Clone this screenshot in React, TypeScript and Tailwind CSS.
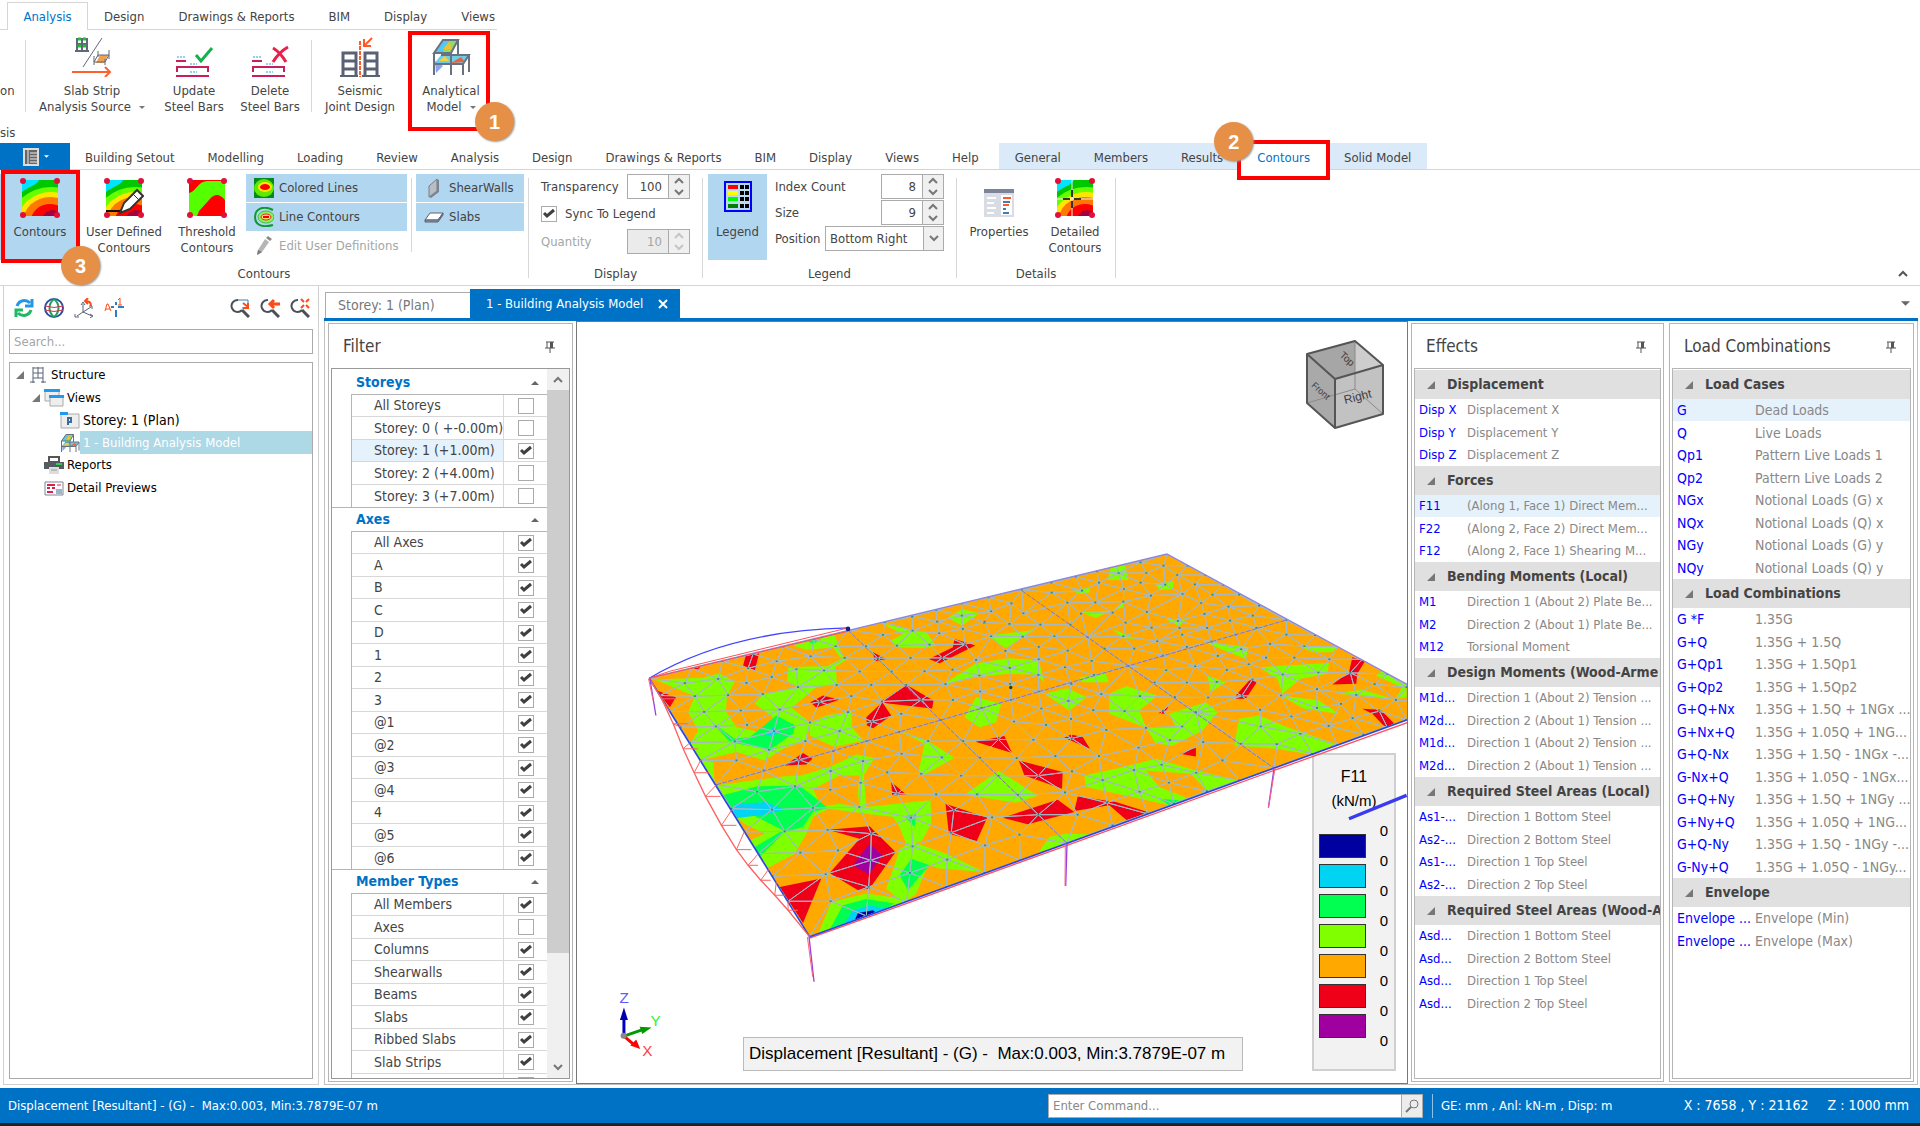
import { ReactNode } from "react";
import clsx from "clsx";

type Point = [number, number];

/* ---------- data ---------- */

const stripTabs = ["Design", "Drawings & Reports", "BIM", "Display", "Views"];

const ribbonTabs = [
  "Building Setout",
  "Modelling",
  "Loading",
  "Review",
  "Analysis",
  "Design",
  "Drawings & Reports",
  "BIM",
  "Display",
  "Views",
  "Help",
];

const filterGroups = [
  {
    title: "Storeys",
    rows: ["All Storeys", "Storey: 0 ( +-0.00m)", "Storey: 1 (+1.00m)", "Storey: 2 (+4.00m)", "Storey: 3 (+7.00m)"],
    checked: ["Storey: 1 (+1.00m)"],
  },
  {
    title: "Axes",
    rows: ["All Axes", "A", "B", "C", "D", "1", "2", "3", "@1", "@2", "@3", "@4", "4", "@5", "@6"],
    checked: ["All Axes", "A", "B", "C", "D", "1", "2", "3", "@1", "@2", "@3", "@4", "4", "@5", "@6"],
  },
  {
    title: "Member Types",
    rows: ["All Members", "Axes", "Columns", "Shearwalls", "Beams", "Slabs", "Ribbed Slabs", "Slab Strips", ""],
    checked: ["All Members", "Columns", "Shearwalls", "Beams", "Slabs", "Ribbed Slabs", "Slab Strips"],
  },
];

type Group = { title: string; rows: [string, string][] };

const effects: Group[] = [
  {
    title: "Displacement",
    rows: [
      ["Disp X", "Displacement X"],
      ["Disp Y", "Displacement Y"],
      ["Disp Z", "Displacement Z"],
    ],
  },
  {
    title: "Forces",
    rows: [
      ["F11", "(Along 1, Face 1) Direct Mem..."],
      ["F22", "(Along 2, Face 2) Direct Mem..."],
      ["F12", "(Along 2, Face 1) Shearing M..."],
    ],
  },
  {
    title: "Bending Moments (Local)",
    rows: [
      ["M1", "Direction 1 (About 2) Plate Be..."],
      ["M2", "Direction 2 (About 1) Plate Be..."],
      ["M12", "Torsional Moment"],
    ],
  },
  {
    title: "Design Moments (Wood-Arme",
    rows: [
      ["M1d...", "Direction 1 (About 2) Tension ..."],
      ["M2d...", "Direction 2 (About 1) Tension ..."],
      ["M1d...", "Direction 1 (About 2) Tension ..."],
      ["M2d...", "Direction 2 (About 1) Tension ..."],
    ],
  },
  {
    title: "Required Steel Areas (Local)",
    rows: [
      ["As1-...", "Direction 1 Bottom Steel"],
      ["As2-...", "Direction 2 Bottom Steel"],
      ["As1-...", "Direction 1 Top Steel"],
      ["As2-...", "Direction 2 Top Steel"],
    ],
  },
  {
    title: "Required Steel Areas (Wood-A",
    rows: [
      ["Asd...", "Direction 1 Bottom Steel"],
      ["Asd...", "Direction 2 Bottom Steel"],
      ["Asd...", "Direction 1 Top Steel"],
      ["Asd...", "Direction 2 Top Steel"],
    ],
  },
];

const loads: Group[] = [
  {
    title: "Load Cases",
    rows: [
      ["G", "Dead Loads"],
      ["Q", "Live Loads"],
      ["Qp1", "Pattern Live Loads 1"],
      ["Qp2", "Pattern Live Loads 2"],
      ["NGx", "Notional Loads (G) x"],
      ["NQx", "Notional Loads (Q) x"],
      ["NGy", "Notional Loads (G) y"],
      ["NQy", "Notional Loads (Q) y"],
    ],
  },
  {
    title: "Load Combinations",
    rows: [
      ["G *F", "1.35G"],
      ["G+Q", "1.35G + 1.5Q"],
      ["G+Qp1", "1.35G + 1.5Qp1"],
      ["G+Qp2", "1.35G + 1.5Qp2"],
      ["G+Q+Nx", "1.35G + 1.5Q + 1NGx ..."],
      ["G+Nx+Q", "1.35G + 1.05Q + 1NG..."],
      ["G+Q-Nx", "1.35G + 1.5Q - 1NGx -..."],
      ["G-Nx+Q", "1.35G + 1.05Q - 1NGx..."],
      ["G+Q+Ny", "1.35G + 1.5Q + 1NGy ..."],
      ["G+Ny+Q", "1.35G + 1.05Q + 1NG..."],
      ["G+Q-Ny", "1.35G + 1.5Q - 1NGy -..."],
      ["G-Ny+Q", "1.35G + 1.05Q - 1NGy..."],
    ],
  },
  {
    title: "Envelope",
    rows: [
      ["Envelope ...", "Envelope (Min)"],
      ["Envelope ...", "Envelope (Max)"],
    ],
  },
];

const legendColors = [
  "bg-[#0000a0]",
  "bg-[#00d4f2]",
  "bg-[#00ff50]",
  "bg-[#80ff00]",
  "bg-[#ffa900]",
  "bg-[#ef0018]",
  "bg-[#a000a0]",
];

/* ---------- slab mesh ---------- */

const nodeText = `28,413 60,465 90,513 122,560 150,607 182,660 230,733 275,805 313,875 356,940 398,1008 445,1083 510,1190
155,383 135,428 235,415 248,362 320,427 325,383 340,340 165,467 265,464 193,514 303,510 228,558 322,553 285,603 403,572
388,628 290,660 372,690 352,754 466,738 397,808 520,803 435,873 482,937 564,869 595,930 558,1002 573,1083 680,1127
687,1040 693,960 695,880 659,800 572,748 663,727 573,692 670,662 478,658 497,602 581,632 600,572 511,546 420,507 540,484
635,467 625,515 681,602 697,543 727,483 785,520 779,574 786,640 743,696 845,700 774,760 814,832 890,762 819,918 811,998
801,1085 923,958 920,1040 935,877 943,810 965,706 907,651 866,602 971,602 903,539 1022,652 1077,706 1013,762 1136,763
1058,831 1140,883 1037,915 1035,998 1143,960 1197,823 1197,706 1132,653 1182,598 1077,597 1124,543 1026,502 1022,453
940,478 845,478 800,433 695,433 756,393 660,393 591,433 553,390 615,352 588,317 513,347 524,296 475,440 369,461 396,409
470,386 411,362 431,318 625,268 679,317 715,353 730,283 735,245 819,270 818,228 772,315 813,352 870,312 855,392 908,352
939,387 918,431 899,278 893,243 890,208 967,225 967,188 970,265 977,311 1010,358 1020,405 1111,382 1112,430 1114,478
1098,331 1055,287 1035,244 1055,212 1047,170 1116,188 1147,147 1152,218 1110,250 1150,288 1197,403
1203,252 1245,287 1237,156 1284,186 1236,126 1293,252 1325,219 1328,150 1309,108 1368,185 1345,290 1285,330 1198,319
1198,356 1198,453 1277,380 1287,481 1296,430 1206,504 1220,553 1295,535 1297,594 1362,509 1386,461 1364,403 1357,361
1396,324 1485,324 1467,376 1373,92 1379,126 1420,216 1452,183 1454,145 1438,97 1430,75 1504,126 1521,97 1504,65 1573,75
1583,40 1614,103 1578,132 1535,165 1523,214 1459,246 1452,287 1537,261 1554,302 1621,262 1616,241 1630,160 1686,187
1667,131 1720,162 1696,220 1704,262 1629,282 1643,319 1571,345 1581,389 1668,377 1643,426 1546,426 1502,467 1456,512
1401,568 1379,647 1298,693 1248,647 1277,756 1283,909 1315,823 1403,787 1420,855 1390,719 1484,689 1501,754 1524,820
1498,622 1520,562 1592,599 1571,512 1607,470 1629,558 1670,515 1692,605 1707,471 1733,424 1763,388 1736,346 1717,303
1773,240 1768,198 1800,162 1752,133 1698,103 1645,75 1841,225 1860,195 1789,282 1829,371 1806,326 1881,351 1893,310
1852,262 1840,417 1808,466 1926,465 1931,402 1966,351 1942,282 1942,238 1996,317 2028,284 2071,356 2038,396 2098,317
2134,397 2170,356 2034,446 2034,502 1957,528 1863,508 1865,558 1913,611 1806,610 1984,580 1905,683 2019,640 1750,660
1800,720 1671,697 1703,752 1589,727 1604,790 1567,673 2069,556 2095,614 2141,533 2173,582 2106,490 2152,463 2221,512
2245,560 2207,431 2245,400 2271,478 2303,440 2303,538 2422,495`;

const nodes = nodeText.split(/\s+/).map((p) => p.split(",").map(Number) as Point);

// The slab is seen at a low angle, so y is stretched before triangulating
const STRETCH = 1.5;

function triangulate(points: Point[]) {
  const pts: Point[] = points.map(([x, y]) => [x, y * STRETCH]);
  const n = pts.length;
  pts.push([-90000, -90000], [90000, -90000], [0, 150000]);

  const circle = (a: number, b: number, c: number) => {
    const [ax, ay] = pts[a];
    const [bx, by] = pts[b];
    const [cx, cy] = pts[c];
    const d = 2 * (ax * (by - cy) + bx * (cy - ay) + cx * (ay - by)) || 1e-9;
    const a2 = ax * ax + ay * ay;
    const b2 = bx * bx + by * by;
    const c2 = cx * cx + cy * cy;
    const x = (a2 * (by - cy) + b2 * (cy - ay) + c2 * (ay - by)) / d;
    const y = (a2 * (cx - bx) + b2 * (ax - cx) + c2 * (bx - ax)) / d;
    return { v: [a, b, c], x, y, r: (ax - x) ** 2 + (ay - y) ** 2 };
  };

  let tris = [circle(n, n + 1, n + 2)];
  for (let i = 0; i < n; i++) {
    const edges = new Map<string, [number, number]>();
    tris = tris.filter((t) => {
      if ((pts[i][0] - t.x) ** 2 + (pts[i][1] - t.y) ** 2 >= t.r) return true;
      for (let k = 0; k < 3; k++) {
        const a = Math.min(t.v[k], t.v[(k + 1) % 3]);
        const b = Math.max(t.v[k], t.v[(k + 1) % 3]);
        const key = `${a}-${b}`;
        if (edges.has(key)) edges.delete(key);
        else edges.set(key, [a, b]);
      }
      return false;
    });
    edges.forEach(([a, b]) => tris.push(circle(a, b, i)));
  }
  return tris.filter((t) => t.v.every((k) => k < n)).map((t) => t.v);
}

const meshPath = triangulate(nodes)
  .map((t) => "M" + t.map((k) => nodes[k].join(" ")).join("L") + "Z")
  .join("");

const nodePath = nodes.map(([x, y]) => `M${x - 3} ${y}h6`).join("");

const outline = "28,413 1583,40 2422,495 510,1190";

const lime = [
  "45,417 190,412 238,398 285,424 262,466 258,512 290,560 380,580 400,530 345,490 369,461 475,438 442,422 446,382 500,378 588,378 592,432 530,440 455,502 512,546 500,600 430,625 375,660 290,635 182,660 152,607 175,570 145,515 165,467",
  "512,546 560,525 636,512 636,560 672,600 585,620 510,585",
  "185,660 220,665 225,735 430,708 485,705 570,680 650,642 705,652 672,705 600,705 520,745 545,800 600,790 660,800 655,760 660,700 672,700 680,800 873,780 875,850 845,905 800,910 780,860 760,830 565,805 520,830 500,880 465,940 370,990 330,900 375,880 313,850 290,830 250,780",
  "460,315 585,283 610,350 625,355 600,370 588,378 555,392 540,388 605,355 580,320 500,328",
  "725,248 815,268 860,275 888,315 860,322 770,320 755,300 790,280",
  "925,232 967,205 1020,218 968,255",
  "1045,285 1185,268 1100,322 1080,310",
  "910,432 1010,368 1110,353 1198,360 1215,425 1190,403 1110,400 1020,408",
  "1010,470 1085,490 1070,545 1020,560 975,530",
  "780,570 865,602 945,652 850,705 838,690 855,610",
  "1078,692 1195,765 1130,787 975,763",
  "780,925 820,905 920,940 1035,995 900,985 865,975 830,1060 790,1090 740,1045 770,960",
  "535,1182 575,1085 680,1060 805,1078 700,1125",
  "1405,118 1415,80 1458,75 1468,118",
  "1300,150 1350,140 1352,155 1320,160",
  "1550,130 1605,122 1600,145 1560,148",
  "1325,215 1410,212 1370,232",
  "1420,210 1455,180 1452,200",
  "1580,235 1640,235 1620,258",
  "1420,265 1490,295 1450,292",
  "1320,410 1400,400 1408,425 1330,425",
  "1215,460 1285,443 1342,470 1290,510",
  "1410,460 1460,437 1555,465 1500,510 1520,560 1610,560 1590,520 1700,485 1735,515 1690,570 1600,615 1550,610 1520,562 1410,520",
  "1690,302 1828,320 1820,355 1720,315",
  "1705,405 1760,425 1715,455",
  "1860,380 2070,367 2065,400 1985,415 1930,460 1915,415",
  "1985,318 2098,318 2080,335 2020,335",
  "2210,405 2230,392 2303,430 2303,470 2270,475 2290,440",
  "2095,460 2170,448 2260,475",
  "1925,465 2040,480 2100,520 1995,505",
  "1800,535 1860,525 1945,560 2090,610 2015,642 1910,625 1785,615",
  "1335,705 1440,683 1550,655 1670,690 1800,720 1705,755 1655,700 1520,690 1560,740 1650,775 1590,795 1480,770 1340,740",
  "1198,935 1230,890 1280,880 1350,882 1280,910",
];

const green = [
  "215,545 285,595 330,590 410,525 467,555 460,580 390,628 270,605",
  "245,765 350,738 480,735 565,803 520,815 490,860 435,875 360,950 345,920 430,870 340,825 275,805",
  "795,828 830,820 825,860",
  "815,955 870,975 805,1050 780,1005",
  "570,1168 610,1095 680,1076 765,1090 720,1115",
  "1560,775 1620,780 1590,795",
  "500,300 545,296 520,310",
];

const cyan = [
  "285,790 380,785 435,808 380,822 275,835",
  "375,580 400,560 425,575 390,588",
  "608,1158 640,1110 690,1095 740,1105 680,1135",
];

const red = [
  "50,450 108,470 90,500",
  "318,345 358,338 345,390 310,375",
  "512,485 550,465 598,478 530,502",
  "435,675 490,638 518,655 500,672",
  "700,335 740,355 705,362",
  "720,485 800,433 882,480 878,504 740,488",
  "680,530 728,485 755,525 700,563 682,555",
  "868,355 940,320 945,295 1008,315 900,368",
  "1008,604 1095,587 1118,638",
  "1138,660 1270,695 1268,745 1155,705",
  "918,790 1043,832 1012,902 928,880",
  "755,725 800,762 758,765",
  "565,868 690,858 768,935 690,1045 655,1050 570,998 660,895",
  "420,1040 545,1015 490,1148",
  "1090,832 1255,778 1305,815 1165,852",
  "1305,812 1315,768 1430,785 1525,815 1465,842 1410,795",
  "1275,592 1295,582 1330,590 1352,625",
  "1558,518 1588,498 1575,520",
  "1622,640 1670,622 1670,648",
  "1790,465 1835,415 1853,425 1820,475 1790,475",
  "2080,432 2130,395 2140,350 2178,362 2155,400 2152,430",
  "2170,505 2225,508 2265,548 2240,562 2200,520",
  "155,383 182,378 175,386",
  "1025,245 1040,238 1040,252",
];

// outer curve of the force diagram and the slab-edge points it is tied to
const trussOuter: Point[] = [
  [65, 475], [100, 550], [130, 625], [163, 697], [197, 768], [245, 855],
  [290, 928], [325, 975], [363, 1020], [405, 1065], [445, 1110],
];
const trussEdge: Point[] = [
  [90, 513], [122, 560], [150, 607], [182, 660], [230, 733], [275, 810],
  [313, 875], [356, 940], [388, 985], [410, 1022], [445, 1083],
];

function SlabModel() {
  return (
    <svg
      viewBox="-189 -657 2490 2286"
      preserveAspectRatio="xMinYMin meet"
      className="pointer-events-none absolute inset-0 size-full"
      fill="none"
      role="img"
      aria-label="Building analysis model"
    >
      <defs>
        <clipPath id="slab">
          <polygon points={outline} />
        </clipPath>
      </defs>
      <g clipPath="url(#slab)">
        <polygon points={outline} fill="#ffa900" />
        <g fill="#80ff00">{lime.map((p) => <polygon key={p} points={p} />)}</g>
        <g fill="#00ff50">{green.map((p) => <polygon key={p} points={p} />)}</g>
        <g fill="#00d4f2">{cyan.map((p) => <polygon key={p} points={p} />)}</g>
        <g fill="#ef0018">{red.map((p) => <polygon key={p} points={p} />)}</g>
        <polygon points="690,910 728,945 688,1003 640,975" fill="#a000a0" />
        <polygon points="645,1140 655,1118 700,1110 710,1118" fill="#0000a0" />
        <path d={meshPath} stroke="#a5b9c6" strokeWidth="3" strokeLinejoin="round" />
        <path d={nodePath} stroke="#2a8a8a" strokeWidth="5" />
      </g>

      {/* beams */}
      <path
        d="M625 268L903 539L1283 909M230 733L681 602L903 539L1467 376L1942 238M1147 150L1467 376L1905 683"
        stroke="#9070b8"
        strokeWidth="3"
        strokeDasharray="14 4"
      />
      <path d="M28 413L1583 40L2422 495" stroke="#8f86e0" strokeWidth="4" />
      <path d="M510 1194L800 1090L1283 915L1905 690L2310 545" stroke="#ff5060" strokeWidth="4" />
      <path d="M28 413L510 1190L2310 536" stroke="#2a48e0" strokeWidth="5" />

      {/* force diagrams */}
      <path d="M28 413Q270 270 625 262" stroke="#4545ff" strokeWidth="4" />
      <path d="M28 413L90 392L625 262M28 413L625 272" stroke="#ff5050" strokeWidth="3" />
      <path
        d={`M28 413L${trussOuter.map((p) => p.join(" ")).join("L")}L510 1190`}
        stroke="#ff6060"
        strokeWidth="4"
      />
      <path
        d={trussOuter.map((p, i) => `M${trussEdge[i].join(" ")}L${p.join(" ")}h${i < 7 ? 45 : 30}`).join("")}
        stroke="#ff6060"
        strokeWidth="3"
      />

      {/* columns */}
      <path d="M30 415L48 525M508 1190L523 1325M1283 909L1279 1037M1905 683L1888 802" stroke="#9a40e0" strokeWidth="4" />
      <path d="M26 415L40 480M503 1190L519 1310M1278 909L1277 1037M1908 683L1888 802" stroke="#ff6080" strokeWidth="3" />
      <circle cx="625" cy="265" r="7" fill="#1a1a90" />
      <circle cx="1114" cy="441" r="5" fill="#204020" />
      <path d="M2130 835L2303 765" stroke="#3a3af0" strokeWidth="10" />

      {/* axis triad */}
      <g transform="translate(79 0)">
        <g strokeWidth="9">
          <path d="M-127 1488V1420" stroke="#0000c0" />
          <path d="M-127 1488L-75 1470" stroke="#009a00" />
          <path d="M-127 1488L-98 1513" stroke="#f00" />
        </g>
        <path d="M-127 1402L-115 1440H-139Z" fill="#0000b0" />
        <path d="M-44 1462L-72 1482L-80 1460Z" fill="#009a00" />
        <path d="M-78 1527L-108 1516L-90 1498Z" fill="#f00" />
        <circle cx="-128" cy="1487" r="9" fill="#888" />
        <g fontFamily="Liberation Sans, sans-serif" fontSize="46" textAnchor="middle">
          <text x="-126" y="1390" fill="#5a5aff">Z</text>
          <text x="-32" y="1457" fill="#30f030">Y</text>
          <text x="-57" y="1548" fill="#ff4040">X</text>
        </g>
      </g>
    </svg>
  );
}

function ViewCube() {
  return (
    <svg viewBox="0 0 120 130" className="absolute -top-[2px] -right-[3px] h-[130px] w-[120px]" fill="none">
      <path d="M17 34L65 21L93 45L45 59Z" fill="#a6a6a6" />
      <path d="M17 34L45 59V108L17 83Z" fill="#a9a9a9" />
      <path d="M45 59L93 45V94L45 108Z" fill="#c2c2c2" />
      <path d="M65 21L93 45L65 53Z" fill="#cdcdcd" />
      <path d="M65 21V69L17 83M65 69L93 94" stroke="#8a8a8a" />
      <path d="M17 34L65 21L93 45L45 59ZM17 34V83L45 108V59M45 108L93 94V45" stroke="#555" strokeWidth="2" strokeLinejoin="round" />
      <g fill="#3c3c3c" fontFamily="Liberation Sans, sans-serif">
        <text x="55" y="84" fontSize="12" transform="rotate(-14 55 84)">Right</text>
        <text x="21" y="66" fontSize="9" transform="rotate(42 21 66)">Front</text>
        <text x="49" y="36" fontSize="10" transform="rotate(42 49 36)">Top</text>
      </g>
    </svg>
  );
}

/* ---------- icons ---------- */

function ContourIcon({ kind = "plain" }: { kind?: "plain" | "user" | "threshold" | "detail" }) {
  return (
    <svg viewBox="0 0 40 40" className="h-10 w-10" fill="none">
      {kind === "threshold" ? (
        <>
          <path d="M2 2H38V38H2Z" fill="#f00" />
          <path d="M2 15C10 13 10 4 20 3H38V22C32 15 27 16 22 22L12 33L10 38H2Z" fill="#5f0" />
        </>
      ) : (
        <svg x="2" y="2" width="36" height="36" viewBox="0 0 36 36">
          <path d="M0 0H36V36H0Z" fill="#00c800" />
          <path d="M0 0H17C15 5 6 7 0 12Z" fill="#00e5ff" />
          <ellipse cx="29" cy="46" rx="42" ry="39" fill="#6f0" />
          <ellipse cx="29" cy="44" rx="34" ry="32" fill="#ffe600" />
          <ellipse cx="28" cy="42" rx="27" ry="25" fill="#ff7800" />
          <ellipse cx="28" cy="41" rx="19" ry="17" fill="#f00" />
          <ellipse cx="30" cy="40" rx="10" ry="10" fill="#a5003a" />
        </svg>
      )}
      {kind === "user" && (
        <>
          <path d="M2 33H17" stroke="#111" strokeWidth="2" />
          <path d="M16 35L20 25L33 12L39 18L26 31Z" fill="#fff" stroke="#333" strokeWidth="2" />
          <path d="M29 16L35 22" stroke="#333" strokeWidth="1" />
        </>
      )}
      {kind === "detail" && (
        <>
          <path d="M17 2V38M2 21H38" stroke="#eee" />
          <path d="M17 12V19M17 23V30M8 21H15M19 21H26" stroke="#333" strokeWidth="2" />
        </>
      )}
      <g fill="#e0103a">
        <circle cx="3" cy="3" r="3" />
        <circle cx="37" cy="3" r="3" />
        <circle cx="3" cy="37" r="3" />
        <circle cx="37" cy="37" r="3" />
      </g>
    </svg>
  );
}

function FrameIcon({ className }: { className: string }) {
  return (
    <svg viewBox="0 0 40 40" className={className} fill="none">
      <path d="M3 16L12 3H27L20 16Z" fill="#8fdc6a" />
      <path d="M3 16L12 3H19L11 16Z" fill="#55c8f0" />
      <path d="M12 12L18 5L21 12Z" fill="#f5c030" />
      <path d="M3 27L10 18H38L32 27Z" fill="#6cd0e4" />
      <path d="M8 24L14 19L18 24Z" fill="#f5d040" />
      <path d="M20 26L30 20L34 25Z" fill="#ef6040" />
      <path d="M4 24L12 29L5 36Z" fill="#8aa5f5" />
      <path
        d="M12 3H27L20 16H3ZM3 16V38M20 16V38M27 3V18M3 27H32L38 18H10M32 27V38M38 18V35"
        stroke="#6a7282"
        strokeWidth="2"
      />
    </svg>
  );
}

function StripIcon() {
  return (
    <svg viewBox="0 0 40 40" className="h-10 w-10" fill="none">
      <path d="M5 1V14M10 1V14M15 1V14M5 7H15M3 14H17" stroke="#5f6879" strokeWidth="2" />
      <path d="M6 2H9M11 2H14M6 9H9M11 9H14" stroke="#20c030" strokeWidth="3" />
      <path d="M30 1L11 30" stroke="#5f6879" strokeWidth="1" />
      <path d="M24 26L28 18H36L32 26Z" fill="#f0a050" />
      <path d="M22 19V28M26 14V20M37 13V22M33 22V28M22 25H33L37 18H26Z" stroke="#5f6879" strokeWidth="1" />
      <path d="M0 35H37M33 30L38 35L33 40" stroke="#ff6030" strokeWidth="2" />
    </svg>
  );
}

function BarsIcon({ remove = false }: { remove?: boolean }) {
  return (
    <svg viewBox="0 0 40 40" className="h-10 w-10" fill="none">
      <path d="M2 24H12M3 35V30H34V35M2 39H35" stroke="#c81e5a" strokeWidth="2" />
      <path d="M3 20H11M16 27H23M16 35H23" stroke="#29a3ea" strokeWidth="1" strokeDasharray="2 1" />
      {remove ? (
        <path d="M23 11C28 14 33 20 36 25M38 10C31 14 26 20 23 25" stroke="#e8204a" strokeWidth="3" />
      ) : (
        <path d="M22 18L27 24L38 11" stroke="#17b050" strokeWidth="3" />
      )}
    </svg>
  );
}

function SeismicIcon() {
  return (
    <svg viewBox="0 0 40 40" className="h-10 w-10" fill="none">
      <path d="M3 39V16H16V39M3 24H16M3 32H16M25 39V16H37V39M25 24H37M25 32H37" stroke="#596275" strokeWidth="3" />
      <path d="M0 39H18M22 39H40" stroke="#596275" strokeWidth="2" />
      <path d="M20 4V40" stroke="#ff5a28" strokeWidth="2" strokeDasharray="4 1" />
      <path d="M32 1L25 8M24 2V9H31" stroke="#ff5a28" strokeWidth="2" />
    </svg>
  );
}

function LegendIcon() {
  return (
    <svg viewBox="0 0 40 40" className="h-10 w-10" fill="none">
      <rect x="7" y="4" width="26" height="29" stroke="#00f" strokeWidth="2" fill="#b9daf0" />
      <path d="M10 9H20" stroke="#f00" strokeWidth="4" />
      <path d="M10 15H20" stroke="#ff0" strokeWidth="4" />
      <path d="M10 21H20" stroke="#0f0" strokeWidth="4" />
      <path d="M10 28H20" stroke="#008000" strokeWidth="4" />
      <path d="M22 9H31M22 15H31M22 21H31M22 28H31" stroke="#000" strokeWidth="4" strokeDasharray="4 1" />
    </svg>
  );
}

function PropertiesIcon() {
  return (
    <svg viewBox="0 0 40 40" className="h-10 w-10" fill="none">
      <path d="M5 11H35V39H5Z" fill="#d9dce3" />
      <path d="M5 11H35V15H5Z" fill="#7b8499" />
      <path d="M22 17H33V37H22Z" fill="#fff" />
      <path d="M8 20H17M8 25H15M8 30H17M8 35H15" stroke="#fff" strokeWidth="2" />
      <path d="M24 20H32M24 27H30" stroke="#ff5a28" strokeWidth="2" />
      <path d="M24 24H31M24 31H27M24 35H30" stroke="#3f7fb5" strokeWidth="2" />
    </svg>
  );
}

function ColoredLinesIcon() {
  return (
    <svg viewBox="0 0 20 20" className="size-5 shrink-0">
      <rect width="20" height="20" fill="#008a20" />
      <ellipse cx="10" cy="10" rx="10" ry="9" fill="#5fe800" />
      <ellipse cx="11" cy="9" rx="7" ry="5" fill="#ffe800" />
      <ellipse cx="11" cy="9" rx="5" ry="3" fill="#f00" />
    </svg>
  );
}

function LineContoursIcon() {
  return (
    <svg viewBox="0 0 20 20" className="size-5 shrink-0" fill="none">
      <path d="M19 3C9-2 1 2 1 10S8 21 19 18" stroke="#0a9a30" strokeWidth="2" />
      <ellipse cx="12" cy="10" rx="8" ry="6" fill="#8ff060" stroke="#3cc040" />
      <ellipse cx="12" cy="10" rx="5" ry="3" fill="#ffe060" stroke="#f02020" />
      <path d="M9 10H15" stroke="#e00" strokeWidth="2" />
    </svg>
  );
}

function PencilIcon() {
  return (
    <svg viewBox="0 0 20 20" className="size-5 shrink-0">
      <path d="M4 14L11 3L15 6L8 16L3 19Z" fill="#b5b5b5" />
      <path d="M12 2L14 0L18 3L16 5Z" fill="#8a8a8a" />
      <path d="M3 19L4 14L8 16Z" fill="#777" />
    </svg>
  );
}

function WallIcon() {
  return (
    <svg viewBox="0 0 20 20" className="size-5 shrink-0">
      <path d="M5 8L13 1V13L5 19Z" fill="#b9bdc4" stroke="#777f8c" />
      <path d="M13 1L15 2V14L7 20L5 19L13 13Z" fill="#7d8490" />
    </svg>
  );
}

function SlabIcon() {
  return (
    <svg viewBox="0 0 20 20" className="size-5 shrink-0">
      <path d="M6 6H19L14 13H1Z" fill="#fff" stroke="#596275" />
      <path d="M1 13H14L19 6V8L14 15H1Z" fill="#8d95a3" stroke="#596275" />
    </svg>
  );
}

function PinIcon() {
  return (
    <svg viewBox="0 0 12 12" className="size-3" fill="none">
      <path d="M2 1H10M3 1V7M1 7H11M6 7V12" stroke="#555" />
      <path d="M6 1H9V7H6Z" fill="#555" />
    </svg>
  );
}

function Chevron({ up = false, className = "text-[#777]" }: { up?: boolean; className?: string }) {
  return (
    <svg viewBox="0 0 10 7" className={clsx("h-[7px] w-[10px]", className)} fill="none">
      <path d={up ? "M1 6L5 2L9 6" : "M1 1L5 5L9 1"} stroke="currentColor" strokeWidth="2" />
    </svg>
  );
}

function Triangle({ className }: { className: string }) {
  return (
    <svg viewBox="0 0 8 8" className={clsx("size-2", className)}>
      <path d="M8 0V8H0Z" fill="currentColor" />
    </svg>
  );
}

function DownArrow({ className }: { className: string }) {
  return (
    <svg viewBox="0 0 8 4" className={className}>
      <path d="M0 0H8L4 4Z" fill="currentColor" />
    </svg>
  );
}

function Magnifier({ children }: { children?: ReactNode }) {
  return (
    <svg viewBox="0 0 20 20" className="size-5" fill="none">
      <path d="M8 2A6 6 0 1 0 12 12" stroke="#4a4f58" strokeWidth="2" />
      <path d="M12 12L19 19" stroke="#4a4f58" strokeWidth="3" />
      {children}
    </svg>
  );
}

/* ---------- small controls ---------- */

function IconButton({ label, children }: { label: string; children: ReactNode }) {
  return (
    <button type="button" aria-label={label} className="flex size-5 items-center justify-center">
      {children}
    </button>
  );
}

function Badge({ n, className }: { n: number; className: string }) {
  return (
    <span
      className={clsx(
        "absolute z-20 flex size-[39px] items-center justify-center rounded-full bg-[#e69047] font-['Liberation_Sans',sans-serif] text-xl font-bold text-white shadow-[1px_1px_2px_#999]",
        className
      )}
    >
      {n}
    </span>
  );
}

function Highlight({ className }: { className: string }) {
  return <span className={clsx("pointer-events-none absolute z-10 border-4 border-[#fe0000]", className)} />;
}

function BigButton({
  icon,
  lines,
  menu = false,
  className,
}: {
  icon: ReactNode;
  lines: string[];
  menu?: boolean;
  className: string;
}) {
  return (
    <button type="button" className={clsx("flex shrink-0 flex-col items-center whitespace-nowrap leading-4", className)}>
      {icon}
      <span className="mt-[6px]">{lines[0]}</span>
      {lines[1] && (
        <span className="flex items-center">
          {lines[1]}
          {menu && <DownArrow className="ml-2 h-[3px] w-[6px] text-[#777]" />}
        </span>
      )}
    </button>
  );
}

function ToggleButton({ icon, label, active = false }: { icon: ReactNode; label: string; active?: boolean }) {
  return (
    <button
      type="button"
      disabled={!active}
      className={clsx(
        "flex h-7 items-center gap-[5px] px-2 whitespace-nowrap",
        active ? "bg-[#b1d6f0]" : "text-[#a5a5a5]"
      )}
    >
      {icon}
      {label}
    </button>
  );
}

function Spinner({ id, value, disabled = false }: { id: string; value: string; disabled?: boolean }) {
  return (
    <div className={clsx("flex h-[25px] w-[63px] border border-[#ababab]", disabled && "bg-[#ebebeb] text-[#a5a5a5]")}>
      <input id={id} defaultValue={value} disabled={disabled} className="w-10 min-w-0 bg-transparent pr-[6px] text-right outline-none" />
      <div className="flex flex-1 flex-col items-center justify-around border-l border-[#ababab] bg-[#f0f0f0]">
        <button type="button" aria-label="Increase" disabled={disabled}>
          <Chevron up className={disabled ? "text-[#c5c5c5]" : "text-[#777]"} />
        </button>
        <button type="button" aria-label="Decrease" disabled={disabled}>
          <Chevron className={disabled ? "text-[#c5c5c5]" : "text-[#777]"} />
        </button>
      </div>
    </div>
  );
}

function CheckBox({ id, checked }: { id: string; checked: boolean }) {
  return (
    <span className="relative flex size-4">
      <input id={id} type="checkbox" defaultChecked={checked} className="peer size-4 appearance-none border border-[#ababab] bg-white" />
      <svg viewBox="0 0 16 16" className="pointer-events-none absolute inset-0 hidden size-4 peer-checked:block" fill="none">
        <path d="M3 7L6 10L13 4" stroke="#404040" strokeWidth="3" />
      </svg>
    </span>
  );
}

function RibbonGroup({ title, className, children }: { title: string; className?: string; children: ReactNode }) {
  return (
    <section className="flex shrink-0">
      <div className="pt-1">
        <div className={clsx("flex h-[90px]", className)}>{children}</div>
        <h3 className="text-center leading-5">{title}</h3>
      </div>
      <div className="mt-2 h-[100px] w-px bg-[#d8d8d8]" />
    </section>
  );
}

/* ---------- page parts ---------- */

function AnalysisStrip() {
  return (
    <div className="relative h-[143px]">
      <nav className="flex h-[30px] w-[497px]">
        <span className="w-[7px] shrink-0 border-b border-[#d5d5d5]" />
        <button type="button" className="mt-[2px] w-[81px] shrink-0 border border-b-0 border-[#d5d5d5] text-[#0072c6]">
          Analysis
        </button>
        <div className="flex flex-1 gap-[2px] border-b border-[#d5d5d5] pt-1">
          {stripTabs.map((tab) => (
            <button key={tab} type="button" className="h-[26px] px-4 whitespace-nowrap last:pr-0">
              {tab}
            </button>
          ))}
        </div>
      </nav>
      <div className="flex pt-px">
        <div className="w-[25px] pt-[52px] leading-4">on</div>
        <div className="mt-[9px] h-[72px] w-px bg-[#d8d8d8]" />
        <BigButton icon={<StripIcon />} lines={["Slab Strip", "Analysis Source"]} menu className="w-[132px] pt-[6px]" />
        <BigButton icon={<BarsIcon />} lines={["Update", "Steel Bars"]} className="w-[72px] pt-[6px]" />
        <BigButton icon={<BarsIcon remove />} lines={["Delete", "Steel Bars"]} className="w-20 pt-[6px]" />
        <div className="mt-[9px] ml-px h-[72px] w-px bg-[#d8d8d8]" />
        <BigButton icon={<SeismicIcon />} lines={["Seismic", "Joint Design"]} className="w-24 pt-[6px]" />
        <div className="relative h-[100px] w-[82px]">
          <BigButton
            icon={<FrameIcon className="h-10 w-10" />}
            lines={["Analytical", "Model"]}
            menu
            className="w-full pt-[6px] pl-1"
          />
          <Highlight className="inset-0" />
          <Badge n={1} className="top-[71px] left-[67px]" />
        </div>
      </div>
      <span className="-mt-1 block leading-3">sis</span>
    </div>
  );
}

function RibbonTabs() {
  return (
    <nav className="flex h-[27px] border-b border-[#d5d5d5] whitespace-nowrap">
      <button type="button" aria-label="File" className="flex h-[27px] w-[70px] items-center gap-[5px] bg-[#0072c6] pl-[23px] text-white">
        <svg viewBox="0 0 16 18" className="h-[18px] w-4" fill="none">
          <path d="M1 1H15V17H1Z" fill="#666" stroke="#ddd" strokeWidth="2" />
          <path d="M5 1V17M7 5H14M7 8H14M7 11H14M7 14H14" stroke="#eee" />
        </svg>
        <DownArrow className="h-[3px] w-[5px]" />
      </button>
      <div className="-ml-px flex gap-px">
        {ribbonTabs.map((tab) => (
          <button key={tab} type="button" className="px-4 pt-[3px]">
            {tab}
          </button>
        ))}
      </div>
      <div className="ml-1 flex gap-px bg-[#daeaf8]">
        {["General", "Members", "Results"].map((tab) => (
          <button key={tab} type="button" className="px-4 pt-[3px]">
            {tab}
          </button>
        ))}
        <div className="relative">
          <button type="button" className="h-[27px] bg-white px-[17px] pt-[3px] text-[#0072c6]">
            Contours
          </button>
          <Highlight className="-inset-x-[3px] -top-[3px] h-10" />
          <Badge n={2} className="-top-[21px] -left-[26px]" />
        </div>
        <button type="button" className="px-4 pt-[3px]">
          Solid Model
        </button>
      </div>
    </nav>
  );
}

function Ribbon() {
  return (
    <div className="flex h-[116px] border-b border-[#d5d5d5]">
      <RibbonGroup title="Contours">
        <div className="relative w-20">
          <BigButton icon={<ContourIcon />} lines={["Contours"]} className="h-[86px] w-20 bg-[#b1d6f0] pt-1" />
          <Highlight className="-top-1 right-0 left-px h-[93px]" />
          <Badge n={3} className="top-[72px] left-[61px]" />
        </div>
        <BigButton icon={<ContourIcon kind="user" />} lines={["User Defined", "Contours"]} className="w-[88px] pt-1" />
        <BigButton icon={<ContourIcon kind="threshold" />} lines={["Threshold", "Contours"]} className="w-[78px] pt-1" />
        <div className="flex w-[161px] flex-col gap-px">
          <ToggleButton icon={<ColoredLinesIcon />} label="Colored Lines" active />
          <ToggleButton icon={<LineContoursIcon />} label="Line Contours" active />
          <ToggleButton icon={<PencilIcon />} label="Edit User Definitions" />
        </div>
        <div className="mx-1 mt-1 h-[74px] w-px bg-[#d8d8d8]" />
        <div className="mr-1 flex w-[108px] flex-col gap-px">
          <ToggleButton icon={<WallIcon />} label="ShearWalls" active />
          <ToggleButton icon={<SlabIcon />} label="Slabs" active />
        </div>
      </RibbonGroup>

      <RibbonGroup title="Display" className="w-[173px] flex-col gap-[2px] pr-3 pl-3">
        <div className="flex justify-between">
          <label htmlFor="transparency" className="leading-[25px]">Transparency</label>
          <Spinner id="transparency" value="100" />
        </div>
        <div className="flex h-[26px] items-center gap-2">
          <CheckBox id="sync" checked />
          <label htmlFor="sync">Sync To Legend</label>
        </div>
        <div className="flex justify-between">
          <label htmlFor="quantity" className="leading-[25px] text-[#a5a5a5]">Quantity</label>
          <Spinner id="quantity" value="10" disabled />
        </div>
      </RibbonGroup>

      <RibbonGroup title="Legend" className="w-[253px] pr-3 pl-[5px]">
        <BigButton icon={<LegendIcon />} lines={["Legend"]} className="h-[86px] w-[59px] bg-[#b1d6f0] pt-1" />
        <div className="ml-2 flex flex-1 flex-col gap-px">
          <div className="flex justify-between">
            <label htmlFor="indexCount" className="leading-[25px]">Index Count</label>
            <Spinner id="indexCount" value="8" />
          </div>
          <div className="flex justify-between">
            <label htmlFor="size" className="leading-[25px]">Size</label>
            <Spinner id="size" value="9" />
          </div>
          <div className="flex justify-between">
            <label htmlFor="position" className="leading-[25px]">Position</label>
            <div className="relative h-[25px] w-[119px] border border-[#ababab]">
              <select id="position" className="size-full appearance-none pl-1 outline-none">
                <option>Bottom Right</option>
              </select>
              <span className="pointer-events-none absolute inset-y-0 right-0 flex w-5 items-center justify-center border-l border-[#ababab] bg-[#f0f0f0]">
                <Chevron />
              </span>
            </div>
          </div>
        </div>
      </RibbonGroup>

      <RibbonGroup title="Details" className="w-[158px] pl-1">
        <BigButton icon={<PropertiesIcon />} lines={["Properties"]} className="w-[76px] pt-1" />
        <BigButton icon={<ContourIcon kind="detail" />} lines={["Detailed", "Contours"]} className="w-[76px] pt-1" />
      </RibbonGroup>

      <button type="button" aria-label="Collapse ribbon" className="mt-auto mr-3 mb-2 ml-auto">
        <Chevron up className="text-[#555]" />
      </button>
    </div>
  );
}

function TreeRow({
  icon,
  label,
  open = false,
  selected = false,
  className,
}: {
  icon: ReactNode;
  label: string;
  open?: boolean;
  selected?: boolean;
  className: string;
}) {
  return (
    <li className={clsx("flex h-[22px] items-center text-black even:h-[23px]", className)}>
      <span className="w-3">{open && <Triangle className="text-[#777]" />}</span>
      <span className="flex w-5 shrink-0 justify-center">{icon}</span>
      <span
        className={clsx(
          "flex h-full flex-1 items-center pl-[3px]",
          selected && "bg-[#add8e6] text-white"
        )}
      >
        {label}
      </span>
    </li>
  );
}

function ProjectPanel() {
  return (
    <aside className="ml-[3px] flex w-[316px] shrink-0 flex-col border-x border-b border-[#d0d0d0] px-[5px] pb-[5px]">
      <div className="flex items-center gap-[10px] pt-3 pr-[3px] pl-[5px]">
        <IconButton label="Refresh">
          <svg viewBox="0 0 20 20" className="size-5" fill="none">
            <path d="M3 8C5 2 12 1 16 5M18 1V8H11" stroke="#2496e8" strokeWidth="3" />
            <path d="M17 12C15 18 8 19 4 15M2 19V12H9" stroke="#1fb865" strokeWidth="3" />
          </svg>
        </IconButton>
        <IconButton label="World">
          <svg viewBox="0 0 20 20" className="size-5" fill="none">
            <circle cx="10" cy="10" r="9" stroke="#2f4f9a" strokeWidth="2" />
            <path d="M10 1C4 6 4 14 10 19C16 14 16 6 10 1" stroke="#1fa060" strokeWidth="2" />
            <path d="M1 8Q10 11 19 8M1 12Q10 15 19 12" stroke="#d8304a" />
          </svg>
        </IconButton>
        <IconButton label="Axes">
          <svg viewBox="0 0 20 20" className="size-5" fill="none">
            <path d="M9 6V14L3 18M9 14L18 18M9 14L17 9" stroke="#596275" />
            <path d="M7 7L9 4L11 7M1 16V19H5M16 16L19 18L16 20M15 8H18V11" stroke="#596275" />
            <path d="M17 8C17 4 15 3 12 3M14 0L11 3L14 6" stroke="#ff4a18" strokeWidth="2" />
          </svg>
        </IconButton>
        <IconButton label="Grid labels">
          <svg viewBox="0 0 20 20" className="size-5" fill="none">
            <path d="M12 4V7M12 12V19M7 9H10M14 9H20" stroke="#2f7fbf" strokeWidth="2" />
            <path d="M1 13L3 6H4L7 13M2 11H6M14 2L16 0V7M14 7H18" stroke="#ff4a18" />
          </svg>
        </IconButton>
        <span className="flex-1" />
        <IconButton label="Zoom window">
          <Magnifier>
            <path d="M8 2H18V10H12" stroke="#2f7fbf" />
            <path d="M13 5L18 9M18 5V10H13" stroke="#ff4a18" strokeWidth="2" />
          </Magnifier>
        </IconButton>
        <IconButton label="Zoom previous">
          <Magnifier>
            <path d="M20 6H11M14 2L10 6L14 10" stroke="#ff4a18" strokeWidth="3" />
          </Magnifier>
        </IconButton>
        <IconButton label="Zoom extents">
          <Magnifier>
            <path d="M11 1L14 4M16 7L19 10M19 1L16 4M14 7L11 10" stroke="#ff4a18" strokeWidth="2" />
          </Magnifier>
        </IconButton>
      </div>
      <input aria-label="Search" placeholder="Search..." className="mt-[11px] h-[25px] border border-[#ababab] px-1 outline-none placeholder:text-[#a5a5a5]" />
      <ul className="mt-2 flex-1 border border-[#ababab] pt-px">
        <TreeRow
          open
          label="Structure"
          className="pl-[6px]"
          icon={
            <svg viewBox="0 0 16 16" className="size-4" fill="none">
              <path d="M3 0V16M8 0V11M13 0V16M3 1H13M3 6H13M3 11H13M0 15H5M11 15H16" stroke="#596275" />
            </svg>
          }
        />
        <TreeRow
          open
          label="Views"
          className="pl-[22px]"
          icon={
            <svg viewBox="0 0 20 18" className="h-[18px] w-5" fill="none">
              <path d="M1 2H15V12H1Z" fill="#eee" stroke="#aaa" />
              <path d="M0 0H16V3H0Z" fill="#1e9bf0" />
              <path d="M6 8H19V17H6Z" fill="#eee" stroke="#aaa" />
              <path d="M5 6H20V9H5Z" fill="#1e9bf0" />
            </svg>
          }
        />
        <TreeRow
          label="Storey: 1 (Plan)"
          className="pl-[38px] text-[14px]"
          icon={
            <svg viewBox="0 0 20 18" className="h-[18px] w-5" fill="none">
              <path d="M1 3H19V17H1Z" fill="#eee" stroke="#aaa" />
              <path d="M0 1H8V4H0Z" fill="#1e9bf0" />
              <path d="M8 14V7H11V11H8" stroke="#3a6ea0" strokeWidth="2" />
            </svg>
          }
        />
        <TreeRow label="1 - Building Analysis Model" selected className="pl-[38px]" icon={<FrameIcon className="size-5" />} />
        <TreeRow
          label="Reports"
          className="pl-[22px]"
          icon={
            <svg viewBox="0 0 20 18" className="h-[18px] w-5" fill="none">
              <path d="M5 1H15V6H5Z" stroke="#555" strokeWidth="2" />
              <path d="M0 6H20V13H0Z" fill="#555b63" />
              <path d="M12 8H18" stroke="#30d050" strokeWidth="2" />
              <path d="M5 11H15V18H5Z" fill="#ddd" />
              <path d="M7 14H13" stroke="#999" />
            </svg>
          }
        />
        <TreeRow
          label="Detail Previews"
          className="pl-[22px]"
          icon={
            <svg viewBox="0 0 20 16" className="h-4 w-5" fill="none">
              <path d="M1 2H19V15H1Z" fill="#fff" stroke="#7d8797" strokeWidth="1" />
              <path d="M3 5H11M3 8H6M8 8H11M3 12H9" stroke="#e0204a" strokeWidth="2" />
              <path d="M13 5H17" stroke="#e0204a" />
              <path d="M12 9H18V14H12Z" fill="#9fb3cc" />
            </svg>
          }
        />
      </ul>
    </aside>
  );
}

function Panel({ title, className, children }: { title: string; className: string; children: ReactNode }) {
  return (
    <section className={clsx("my-[2px] flex shrink-0 flex-col border border-[#b5b5b5] p-[2px]", className)}>
      <header className="flex h-[42px] shrink-0 items-center justify-between pr-[14px] pl-3">
        <h2 className="text-[17px]">{title}</h2>
        <button type="button" aria-label={`Pin ${title}`}>
          <PinIcon />
        </button>
      </header>
      {children}
    </section>
  );
}

function FilterPanel() {
  return (
    <Panel title="Filter" className="ml-[3px] w-[245px]">
      <div className="flex min-h-0 flex-1 basis-0 border border-[#999] text-[14px]">
        <div className="flex-1 overflow-hidden pt-px">
          {filterGroups.map((group, i) => (
            <fieldset key={group.title}>
              <legend className="contents">
                <span
                  className={clsx(
                    "flex h-6 w-full items-center justify-between border-t pr-2 pl-6 font-bold text-[#0072c6]",
                    i > 0 ? "border-[#b5b5b5]" : "border-transparent"
                  )}
                >
                  {group.title}
                  <DownArrow className="h-1 w-2 rotate-180 text-[#666]" />
                </span>
              </legend>
              <div className="ml-[19px] border-t border-l border-[#b5b5b5]">
                {group.rows.map((row) => (
                  <div key={row} className="flex h-[22px] border-b border-[#d8d8d8] last:border-b-0 even:h-[23px]">
                    <label
                      htmlFor={`${group.title}-${row}`}
                      className={clsx(
                        "flex flex-1 items-center border-r border-[#d8d8d8] pl-[22px] whitespace-nowrap",
                        row === "Storey: 1 (+1.00m)" && "bg-[#e5f1fb]"
                      )}
                    >
                      {row}
                    </label>
                    <span className="flex w-[43px] items-center justify-center">
                      <CheckBox id={`${group.title}-${row}`} checked={group.checked.includes(row)} />
                    </span>
                  </div>
                ))}
              </div>
            </fieldset>
          ))}
        </div>
        <div className="flex w-[22px] flex-col items-center bg-[#f0f0f0]">
          <button type="button" aria-label="Scroll up" className="flex h-[21px] shrink-0 items-center">
            <Chevron up />
          </button>
          <div className="w-full flex-[562] bg-[#cdcdcd]" />
          <div className="flex-[104]" />
          <button type="button" aria-label="Scroll down" className="flex h-[21px] shrink-0 items-center">
            <Chevron />
          </button>
        </div>
      </div>
    </Panel>
  );
}

function DataPanel({
  title,
  groups,
  selected,
  keyWidth,
  className,
}: {
  title: string;
  groups: Group[];
  selected: string;
  keyWidth: string;
  className: string;
}) {
  return (
    <Panel title={title} className={className}>
      <div className="min-h-0 flex-1 basis-0 overflow-hidden border border-[#b5b5b5] pt-px">
        {groups.map((group) => (
          <table key={group.title} className="w-full table-fixed border-collapse whitespace-nowrap">
            <colgroup>
              <col className={keyWidth} />
              <col />
            </colgroup>
            <thead>
              <tr className="h-[29px] bg-[#e0e0e0]">
                <th colSpan={2} className="overflow-hidden p-0 text-left text-[14px] font-bold">
                  <span className="flex items-center gap-3 pl-3">
                    <Triangle className="shrink-0 text-[#777]" />
                    {group.title}
                  </span>
                </th>
              </tr>
            </thead>
            <tbody>
              {group.rows.map(([name, text], i) => (
                <tr key={i} className={clsx("h-[22px] leading-5 even:h-[23px]", name === selected && "bg-[#e5f1fb]")}>
                  <td className="p-0 pl-1 text-[#0000ff]">{name}</td>
                  <td className="p-0 text-[#888]">{text}</td>
                </tr>
              ))}
            </tbody>
          </table>
        ))}
      </div>
    </Panel>
  );
}

function Viewport() {
  return (
    <div className="relative ml-[3px] flex-1 overflow-hidden border border-[#777] bg-white font-['Liberation_Sans',sans-serif]">
      <div className="absolute right-[11px] bottom-3 h-[318px] w-[84px] border-2 border-[#d0d0d0] bg-[#f2f2f2] pt-3 text-black">
        <p className="text-center text-base leading-5">F11</p>
        <p className="pt-1 text-center text-[15px] leading-5">(kN/m)</p>
        <div className="flex justify-between pt-[10px] pr-[6px] pl-[5px]">
          <div className="flex flex-col gap-[6px] pt-[13px]">
            {legendColors.map((color) => (
              <span key={color} className={clsx("h-6 w-[47px] border border-[#333]", color)} />
            ))}
          </div>
          <div className="flex flex-col gap-[10px] text-[15px] leading-5">
            {Array.from({ length: 8 }, (_, i) => (
              <span key={i}>0</span>
            ))}
          </div>
        </div>
      </div>
      <p className="absolute bottom-3 left-[166px] w-[500px] border border-[#bbb] bg-[#f2f2f2] px-[5px] text-[17px] leading-8 whitespace-pre text-black">
        Displacement [Resultant] - (G) -  Max:0.003, Min:3.7879E-07 m
      </p>
      <SlabModel />
      <ViewCube />
    </div>
  );
}

function DocumentArea() {
  return (
    <main className="mr-[2px] ml-[5px] flex min-w-0 flex-1 flex-col">
      <div className="flex h-[35px] shrink-0 items-end border-b-[3px] border-[#0072c6]">
        <button type="button" className="ml-px h-[26px] w-[145px] border border-r-0 border-b-0 border-[#ababab] pl-3 text-left text-[14px] text-[#777]">
          Storey: 1 (Plan)
        </button>
        <div className="flex h-[29px] w-[210px] items-center justify-between bg-[#0072c6] pr-3 pl-4 text-white">
          <button type="button" className="whitespace-nowrap">1 - Building Analysis Model</button>
          <button type="button" aria-label="Close tab">
            <svg viewBox="0 0 10 10" className="size-[10px]">
              <path d="M1 1L9 9M9 1L1 9" stroke="#fff" strokeWidth="2" />
            </svg>
          </button>
        </div>
        <button type="button" aria-label="Open documents" className="mr-2 mb-3 ml-auto">
          <DownArrow className="h-[5px] w-[9px] text-[#666]" />
        </button>
      </div>
      <div className="flex min-h-0 flex-1 border-x border-b border-[#c0c0c0]">
        <FilterPanel />
        <Viewport />
        <DataPanel title="Effects" groups={effects} selected="F11" keyWidth="w-[52px]" className="ml-[3px] w-[253px]" />
        <DataPanel
          title="Load Combinations"
          groups={loads}
          selected="G"
          keyWidth="w-[82px]"
          className="mr-[3px] ml-[5px] w-[245px] text-[14px]"
        />
      </div>
    </main>
  );
}

function StatusBar() {
  return (
    <footer className="flex h-[38px] shrink-0 items-center border-b-[3px] border-[#222] bg-[#0072c6] pl-2 whitespace-pre text-white">
      <span>Displacement [Resultant] - (G) -  Max:0.003, Min:3.7879E-07 m</span>
      <div className="ml-auto flex h-6 w-[375px] border border-[#ababab] bg-white">
        <input aria-label="Command" placeholder="Enter Command..." className="min-w-0 flex-1 px-1 outline-none placeholder:text-[#888]" />
        <button type="button" aria-label="Run command" className="flex w-[21px] items-center justify-center border-l border-[#ababab] bg-[#ececec]">
          <svg viewBox="0 0 14 14" className="size-[14px]" fill="none">
            <circle cx="9" cy="5" r="4" stroke="#777" />
            <path d="M6 8L1 13" stroke="#777" strokeWidth="2" />
          </svg>
        </button>
      </div>
      <div className="ml-[9px] flex h-6 w-[488px] items-center border-l border-[#8fc0e6] pr-[11px] pl-2">
        <span>GE: mm , Anl: kN-m , Disp: m</span>
        <span className="ml-auto text-[14px]">X : 7658 , Y : 21162</span>
        <span className="ml-[19px] text-[14px]">Z : 1000 mm</span>
      </div>
    </footer>
  );
}

export default function App() {
  return (
    <div className="flex h-screen flex-col overflow-hidden bg-white font-['DejaVu_Sans_Condensed','Open_Sans',sans-serif] text-[13px] text-[#444]">
      <AnalysisStrip />
      <RibbonTabs />
      <Ribbon />
      <div className="mb-[3px] flex min-h-0 flex-1">
        <ProjectPanel />
        <DocumentArea />
      </div>
      <StatusBar />
    </div>
  );
}
